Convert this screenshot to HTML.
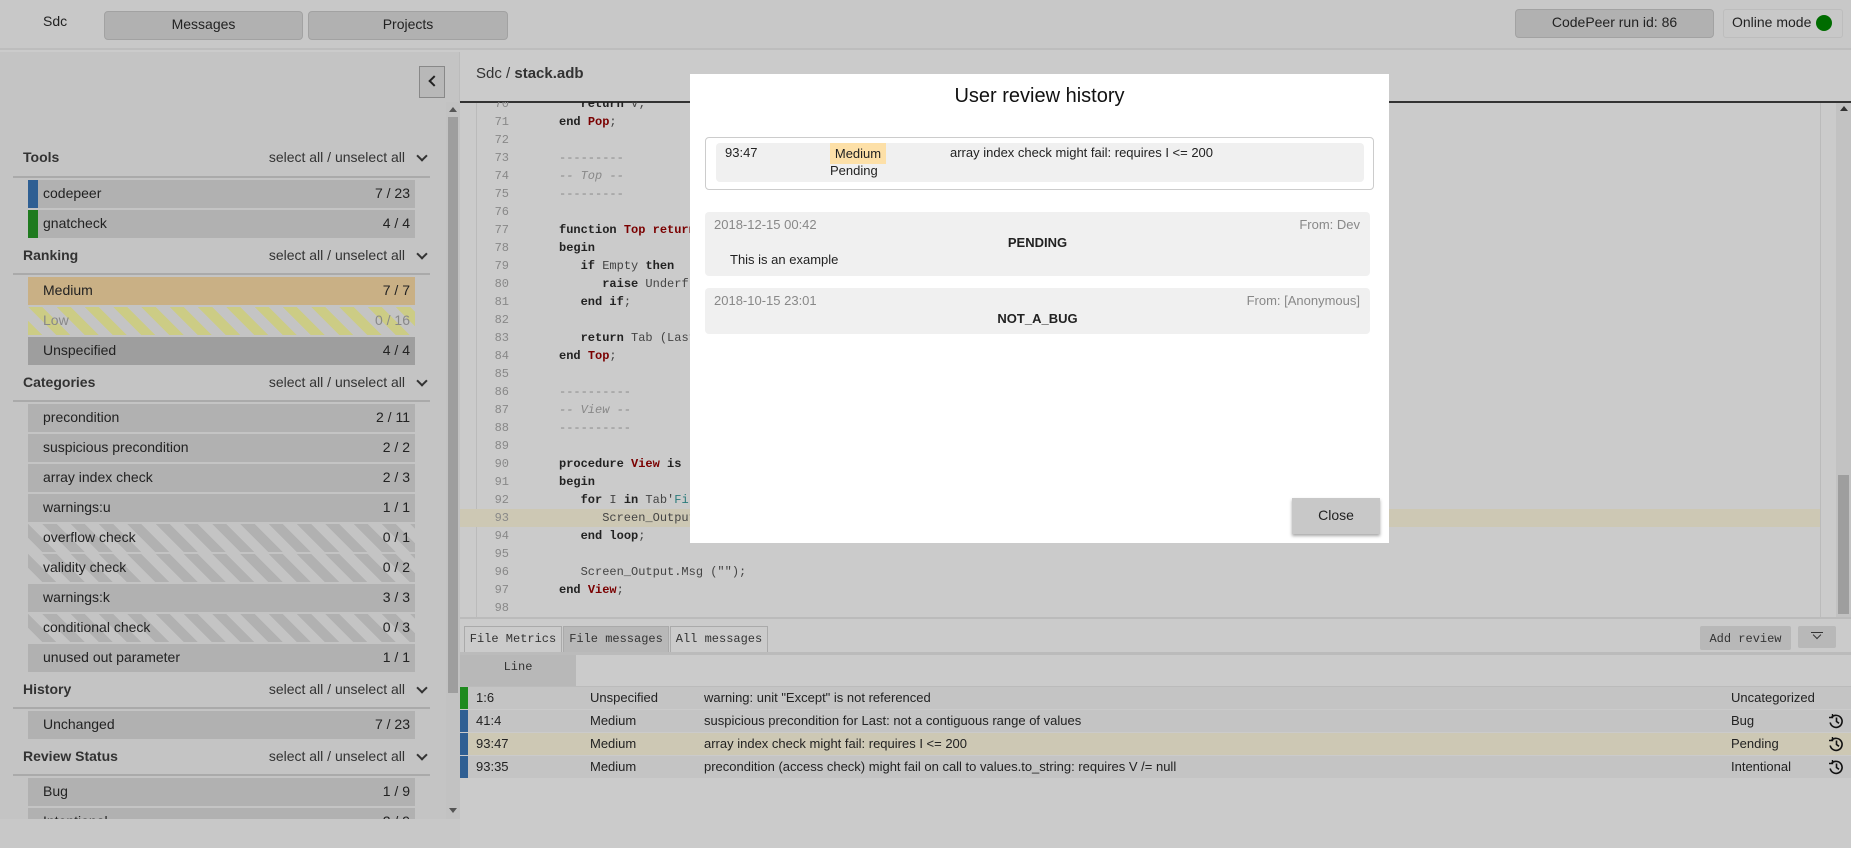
<!DOCTYPE html>
<html><head><meta charset="utf-8"><style>
*{box-sizing:border-box;margin:0;padding:0}
body{width:1851px;height:848px;overflow:hidden;background:#cbcbcb;font-family:"Liberation Sans",sans-serif;color:#222;position:relative}
.a{position:absolute}
.btn{position:absolute;background:#b1b1b1;border:1px solid #a2a2a2;border-radius:4px;text-align:center;font-size:14px;line-height:25px;color:#222}
.sh{position:absolute;left:23px;width:407px;font-size:14px;font-weight:bold;color:#333}
.sh span{position:absolute;right:25px;font-weight:normal;color:#333;top:0}
.sh i{position:absolute;right:4px;top:3px;width:8px;height:8px;border-right:2px solid #333;border-bottom:2px solid #333;transform:rotate(45deg)}
.ln{position:absolute;left:13px;width:417px;height:2px;background:#aaa}
.it{position:absolute;left:28px;width:387px;height:28px;background:#b1b1b1;font-size:14px;line-height:26px;padding-left:15px;color:#222}
.it b{position:absolute;right:5px;font-weight:normal}
.st{background:repeating-linear-gradient(45deg,#c4c4c4 0 10px,#b1b1b1 10px 20px)}
.code{position:absolute;left:460px;top:102px;width:1360px;height:515px;overflow:hidden}
.cl{position:absolute;left:0;width:1360px;height:18px;font:12px/18px "Liberation Mono",monospace;white-space:pre;color:#444}
.cl .n{position:absolute;right:1311px;color:#888;text-align:right}
.cl .t{position:absolute;left:99px}
.k{color:#222;font-weight:bold}.r{color:#7a0000;font-weight:bold}.c{color:#888;font-style:italic}.d{color:#888}
.row{position:absolute;left:460px;width:1391px;height:22px;background:#c4c4c4;font-size:13px;line-height:22px}
.row span{position:absolute}
.row svg{position:absolute;left:1368px;top:3px}
.bar{left:0;top:0;width:8px;height:22px}
</style></head><body>
<div class="a" style="left:0;top:0;width:1851px;height:50px;background:#c8c8c8;border-bottom:2px solid #bdbdbd"></div>
<div class="a" style="left:43px;top:13px;font-size:14px">Sdc</div>
<div class="btn" style="left:104px;top:11px;width:199px;height:29px">Messages</div>
<div class="btn" style="left:308px;top:11px;width:200px;height:29px">Projects</div>
<div class="btn" style="left:1515px;top:9px;width:199px;height:29px">CodePeer run id: 86</div>
<div class="a" style="left:1723px;top:9px;width:120px;height:29px;border:1px solid #bdbdbd;border-radius:3px;font-size:14px;line-height:25px;padding-left:8px">Online mode</div>
<div class="a" style="left:1816px;top:15px;width:16px;height:16px;border-radius:50%;background:#006c00"></div>

<div class="a" style="left:0;top:52px;width:460px;height:796px;background:#c4c4c4;border-right:1px solid #bbb"></div>
<div class="a" style="left:419px;top:66px;width:26px;height:32px;border:1px solid #888;background:#b8b8b8"></div>
<div class="a" style="left:430px;top:77px;width:8px;height:8px;border-left:2px solid #222;border-bottom:2px solid #222;transform:rotate(45deg)"></div>
<div class="a" style="left:446px;top:102px;width:14px;height:717px;background:#c2c2c2"></div>
<div class="a" style="left:448px;top:117px;width:10px;height:576px;background:#9e9e9e"></div>
<div class="a" style="left:449px;top:107px;border:4px solid transparent;border-bottom:5px solid #555;border-top:0"></div>
<div class="a" style="left:449px;top:808px;border:4px solid transparent;border-top:5px solid #555;border-bottom:0"></div>

<div class="sh" style="top:149px">Tools<span>select all / unselect all</span><i></i></div><div class="ln" style="top:176px"></div>
<div class="it" style="top:180px">codepeer<b>7 / 23</b></div><div class="a" style="left:28px;top:180px;width:10px;height:28px;background:#2f5f93"></div>
<div class="it" style="top:210px">gnatcheck<b>4 / 4</b></div><div class="a" style="left:28px;top:210px;width:10px;height:28px;background:#1f7a1f"></div>
<div class="sh" style="top:247px">Ranking<span>select all / unselect all</span><i></i></div><div class="ln" style="top:273px"></div>
<div class="it" style="top:277px;background:#c9b085">Medium<b>7 / 7</b></div>
<div class="it" style="top:307px;background:repeating-linear-gradient(45deg,#cccc85 0 10px,#c4c4c4 10px 20px);color:#888">Low<b>0 / 16</b></div>
<div class="it" style="top:337px;background:#9e9e9e">Unspecified<b>4 / 4</b></div>
<div class="sh" style="top:374px">Categories<span>select all / unselect all</span><i></i></div><div class="ln" style="top:400px"></div>
<div class="it" style="top:404px">precondition<b>2 / 11</b></div>
<div class="it" style="top:434px">suspicious precondition<b>2 / 2</b></div>
<div class="it" style="top:464px">array index check<b>2 / 3</b></div>
<div class="it" style="top:494px">warnings:u<b>1 / 1</b></div>
<div class="it st" style="top:524px">overflow check<b>0 / 1</b></div>
<div class="it st" style="top:554px">validity check<b>0 / 2</b></div>
<div class="it" style="top:584px">warnings:k<b>3 / 3</b></div>
<div class="it st" style="top:614px">conditional check<b>0 / 3</b></div>
<div class="it" style="top:644px">unused out parameter<b>1 / 1</b></div>
<div class="sh" style="top:681px">History<span>select all / unselect all</span><i></i></div><div class="ln" style="top:707px"></div>
<div class="it" style="top:711px">Unchanged<b>7 / 23</b></div>
<div class="sh" style="top:748px">Review Status<span>select all / unselect all</span><i></i></div><div class="ln" style="top:774px"></div>
<div class="it" style="top:778px">Bug<b>1 / 9</b></div>
<div class="a" style="left:28px;top:808px;width:387px;height:11px;overflow:hidden"><div class="it" style="left:0;top:0">Intentional<b>2 / 9</b></div></div>
<div class="a" style="left:0;top:819px;width:460px;height:29px;background:#c8c8c8"></div>

<div class="a" style="left:476px;top:65px;font-size:15px;color:#333">Sdc / <b>stack.adb</b></div>
<div class="a" style="left:460px;top:101px;width:1391px;height:2px;background:#333"></div>
<div class="a" style="left:476px;top:103px;width:1px;height:514px;background:#bbb"></div>
<div class="a" style="left:1820px;top:103px;width:1px;height:514px;background:#bbb"></div>
<div class="a" style="left:1836px;top:103px;width:15px;height:514px;background:#c2c2c2"></div>
<div class="a" style="left:1838px;top:475px;width:11px;height:139px;background:#9e9e9e"></div>
<div class="a" style="left:1840px;top:106px;border:4px solid transparent;border-bottom:5px solid #333;border-top:0"></div>
<div class="code">
<div class="cl" style="top:-7px"><span class="n">70</span><span class="t">   <span class="k">return</span> V;</span></div>
<div class="cl" style="top:11px"><span class="n">71</span><span class="t"><span class="k">end</span> <span class="r">Pop</span>;</span></div>
<div class="cl" style="top:29px"><span class="n">72</span></div>
<div class="cl" style="top:47px"><span class="n">73</span><span class="t d">---------</span></div>
<div class="cl" style="top:65px"><span class="n">74</span><span class="t c">-- Top --</span></div>
<div class="cl" style="top:83px"><span class="n">75</span><span class="t d">---------</span></div>
<div class="cl" style="top:101px"><span class="n">76</span></div>
<div class="cl" style="top:119px"><span class="n">77</span><span class="t"><span class="k">function</span> <span class="r">Top return</span> Integer <span class="k">is</span></span></div>
<div class="cl" style="top:137px"><span class="n">78</span><span class="t"><span class="k">begin</span></span></div>
<div class="cl" style="top:155px"><span class="n">79</span><span class="t">   <span class="k">if</span> Empty <span class="k">then</span></span></div>
<div class="cl" style="top:173px"><span class="n">80</span><span class="t">      <span class="k">raise</span> Underflow;</span></div>
<div class="cl" style="top:191px"><span class="n">81</span><span class="t">   <span class="k">end if</span>;</span></div>
<div class="cl" style="top:209px"><span class="n">82</span></div>
<div class="cl" style="top:227px"><span class="n">83</span><span class="t">   <span class="k">return</span> Tab (Last);</span></div>
<div class="cl" style="top:245px"><span class="n">84</span><span class="t"><span class="k">end</span> <span class="r">Top</span>;</span></div>
<div class="cl" style="top:263px"><span class="n">85</span></div>
<div class="cl" style="top:281px"><span class="n">86</span><span class="t d">----------</span></div>
<div class="cl" style="top:299px"><span class="n">87</span><span class="t c">-- View --</span></div>
<div class="cl" style="top:317px"><span class="n">88</span><span class="t d">----------</span></div>
<div class="cl" style="top:335px"><span class="n">89</span></div>
<div class="cl" style="top:353px"><span class="n">90</span><span class="t"><span class="k">procedure</span> <span class="r">View</span> <span class="k">is</span></span></div>
<div class="cl" style="top:371px"><span class="n">91</span><span class="t"><span class="k">begin</span></span></div>
<div class="cl" style="top:389px"><span class="n">92</span><span class="t">   <span class="k">for</span> I <span class="k">in</span> Tab'<span style="color:#2a7a7a">First</span> .. Last <span class="k">loop</span></span></div>
<div class="cl" style="top:407px;background:#cdc8b4"><span class="n">93</span><span class="t">      Screen_Output.Msg (Tab (I));</span></div>
<div class="cl" style="top:425px"><span class="n">94</span><span class="t">   <span class="k">end loop</span>;</span></div>
<div class="cl" style="top:443px"><span class="n">95</span></div>
<div class="cl" style="top:461px"><span class="n">96</span><span class="t">   Screen_Output.Msg ("");</span></div>
<div class="cl" style="top:479px"><span class="n">97</span><span class="t"><span class="k">end</span> <span class="r">View</span>;</span></div>
<div class="cl" style="top:497px"><span class="n">98</span></div>
</div>

<div class="a" style="left:460px;top:617px;width:1391px;height:2px;background:#bbb"></div>
<div class="a" style="left:464px;top:626px;width:98px;height:27px;border:1px solid #aaa;border-bottom:0;font:12px/25px 'Liberation Mono',monospace;text-align:center;color:#333">File Metrics</div>
<div class="a" style="left:563px;top:626px;width:106px;height:27px;border:1px solid #aaa;border-bottom:0;background:#b8b8b8;font:12px/25px 'Liberation Mono',monospace;text-align:center;color:#333">File messages</div>
<div class="a" style="left:670px;top:626px;width:98px;height:27px;border:1px solid #aaa;border-bottom:0;font:12px/25px 'Liberation Mono',monospace;text-align:center;color:#333">All messages</div>
<div class="a" style="left:1700px;top:626px;width:91px;height:24px;background:#b8b8b8;border-radius:2px;font:12px/26px 'Liberation Mono',monospace;text-align:center;color:#333">Add review</div>
<div class="a" style="left:1798px;top:626px;width:38px;height:22px;background:#b8b8b8;border-radius:2px"></div>
<div class="a" style="left:1811px;top:632px;width:12px;height:1px;background:#333"></div>
<div class="a" style="left:1814px;top:632px;width:6px;height:6px;border-right:1.5px solid #333;border-bottom:1.5px solid #333;transform:rotate(45deg)"></div>
<div class="a" style="left:460px;top:652px;width:1391px;height:3px;background:#bbb"></div>
<div class="a" style="left:460px;top:655px;width:116px;height:31px;background:#b8b8b8;font:12px/24px 'Liberation Mono',monospace;text-align:center;color:#333">Line</div>
<div class="a" style="left:460px;top:686px;width:1391px;height:1px;background:#bbb"></div>
<div class="row" style="top:687px"><span class="bar" style="background:#1f8a1f"></span><span style="left:16px">1:6</span><span style="left:130px">Unspecified</span><span style="left:244px">warning: unit "Except" is not referenced</span><span style="left:1271px">Uncategorized</span></div>
<div class="row" style="top:710px"><span class="bar" style="background:#2f5f93"></span><span style="left:16px">41:4</span><span style="left:130px">Medium</span><span style="left:244px">suspicious precondition for Last: not a contiguous range of values</span><span style="left:1271px">Bug</span><svg width="16" height="16" viewBox="0 0 16 16" fill="none" stroke="#111" stroke-width="1.6"><path d="M3.5 4.5A6 6 0 1 1 2.2 9.5"/><path d="M1 4.5h3.5V1" stroke-width="1.4"/><path d="M8.5 4.5v4l2.5 1.8"/></svg></div>
<div class="row" style="top:733px;background:#cdc8b4"><span class="bar" style="background:#2f5f93"></span><span style="left:16px">93:47</span><span style="left:130px">Medium</span><span style="left:244px">array index check might fail: requires I &lt;= 200</span><span style="left:1271px">Pending</span><svg width="16" height="16" viewBox="0 0 16 16" fill="none" stroke="#111" stroke-width="1.6"><path d="M3.5 4.5A6 6 0 1 1 2.2 9.5"/><path d="M1 4.5h3.5V1" stroke-width="1.4"/><path d="M8.5 4.5v4l2.5 1.8"/></svg></div>
<div class="row" style="top:756px"><span class="bar" style="background:#2f5f93"></span><span style="left:16px">93:35</span><span style="left:130px">Medium</span><span style="left:244px">precondition (access check) might fail on call to values.to_string: requires V /= null</span><span style="left:1271px">Intentional</span><svg width="16" height="16" viewBox="0 0 16 16" fill="none" stroke="#111" stroke-width="1.6"><path d="M3.5 4.5A6 6 0 1 1 2.2 9.5"/><path d="M1 4.5h3.5V1" stroke-width="1.4"/><path d="M8.5 4.5v4l2.5 1.8"/></svg></div>

<div class="a" style="left:690px;top:74px;width:699px;height:469px;background:#fff"></div>
<div class="a" style="left:690px;top:85px;width:699px;text-align:center;font-size:20px;color:#111">User review history</div>
<div class="a" style="left:705px;top:137px;width:669px;height:53px;border:1px solid #ccc;border-radius:4px"></div>
<div class="a" style="left:716px;top:143px;width:648px;height:39px;background:#f0f0f0;border-radius:4px"></div>
<div class="a" style="left:725px;top:145px;font-size:13px">93:47</div>
<div class="a" style="left:830px;top:143px;width:56px;height:21px;background:#fde0a8;font-size:13px;line-height:21px;text-align:center">Medium</div>
<div class="a" style="left:830px;top:163px;font-size:13px">Pending</div>
<div class="a" style="left:950px;top:145px;font-size:13px">array index check might fail: requires I &lt;= 200</div>
<div class="a" style="left:705px;top:212px;width:665px;height:64px;background:#f0f0f0;border-radius:4px;font-size:13px">
<span class="a" style="left:9px;top:5px;color:#888">2018-12-15 00:42</span><span class="a" style="right:10px;top:5px;color:#888">From: Dev</span>
<span class="a" style="left:0;width:665px;top:23px;text-align:center;font-weight:bold">PENDING</span>
<span class="a" style="left:25px;top:40px">This is an example</span></div>
<div class="a" style="left:705px;top:288px;width:665px;height:46px;background:#f0f0f0;border-radius:4px;font-size:13px">
<span class="a" style="left:9px;top:5px;color:#888">2018-10-15 23:01</span><span class="a" style="right:10px;top:5px;color:#888">From: [Anonymous]</span>
<span class="a" style="left:0;width:665px;top:23px;text-align:center;font-weight:bold">NOT_A_BUG</span></div>
<div class="a" style="left:1292px;top:498px;width:88px;height:36px;background:#c8c8c8;box-shadow:0 2px 3px rgba(0,0,0,.35);font-size:14px;line-height:34px;text-align:center">Close</div>
</body></html>
